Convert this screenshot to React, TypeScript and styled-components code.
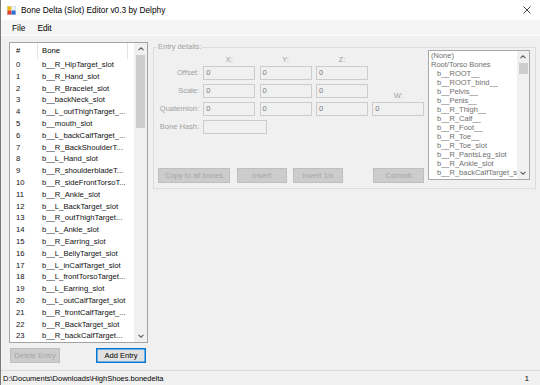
import React from "react";
import styled, { createGlobalStyle } from "styled-components";

const entries = [
  "b__R_HipTarget_slot",
  "b__R_Hand_slot",
  "b__R_Bracelet_slot",
  "b__backNeck_slot",
  "b__L_outThighTarget_...",
  "b__mouth_slot",
  "b__L_backCalfTarget_...",
  "b__R_BackShoulderT...",
  "b__L_Hand_slot",
  "b__R_shoulderbladeT...",
  "b__R_sideFrontTorsoT...",
  "b__R_Ankle_slot",
  "b__L_BackTarget_slot",
  "b__R_outThighTarget...",
  "b__L_Ankle_slot",
  "b__R_Earring_slot",
  "b__L_BellyTarget_slot",
  "b__L_inCalfTarget_slot",
  "b__L_frontTorsoTarget...",
  "b__L_Earring_slot",
  "b__L_outCalfTarget_slot",
  "b__R_frontCalfTarget_...",
  "b__R_BackTarget_slot",
  "b__R_backCalfTarget...",
];

const bones = [
  { name: "(None)", indent: false },
  { name: "Root/Torso Bones", indent: false },
  { name: "b__ROOT__", indent: true },
  { name: "b__ROOT_bind__", indent: true },
  { name: "b__Pelvis__", indent: true },
  { name: "b__Penis__", indent: true },
  { name: "b__R_Thigh__", indent: true },
  { name: "b__R_Calf__", indent: true },
  { name: "b__R_Foot__", indent: true },
  { name: "b__R_Toe__", indent: true },
  { name: "b__R_Toe_slot", indent: true },
  { name: "b__R_PantsLeg_slot", indent: true },
  { name: "b__R_Ankle_slot", indent: true },
  { name: "b__R_backCalfTarget_slot", indent: true },
];

const Chevron = ({ down }: { down?: boolean }) => (
  <svg width="6" height="4" viewBox="0 0 6 4">
    <polyline
      points={down ? "0.5,0.8 3,3.2 5.5,0.8" : "0.5,3.2 3,0.8 5.5,3.2"}
      fill="none"
      stroke="#606060"
      strokeWidth="1.1"
    />
  </svg>
);

const AppIcon = () => (
  <svg width="9" height="9" viewBox="0 0 9 9">
    <rect x="0" y="0" width="9" height="9" fill="#ffffff" stroke="#9aa6b8" strokeWidth="0.8" />
    <rect x="0.5" y="0.5" width="4" height="4" fill="#f2b705" />
    <rect x="4.5" y="0.5" width="4" height="4" fill="#e8eef8" />
    <rect x="0.5" y="4.5" width="4" height="4" fill="#e53b2c" />
    <rect x="4.5" y="4.5" width="4" height="4" fill="#2a6fd6" />
  </svg>
);

const CloseIcon = () => (
  <svg width="8" height="8" viewBox="0 0 8 8">
    <path d="M0.5 0.5 L7.5 7.5 M7.5 0.5 L0.5 7.5" stroke="#111" strokeWidth="0.8" />
  </svg>
);

const Scrollbar = ({ thumbTop, thumbHeight, width }: { thumbTop: number; thumbHeight: number; width: number }) => (
  <ScrollTrack $width={width}>
    <ScrollArrow>
      <Chevron />
    </ScrollArrow>
    <ScrollBody>
      <ScrollThumb style={{ marginTop: thumbTop, height: thumbHeight }} />
    </ScrollBody>
    <ScrollArrow>
      <Chevron down />
    </ScrollArrow>
  </ScrollTrack>
);

const App = () => {
  return (
    <>
      <GlobalStyle />
      <Window>
        <TitleBar>
          <AppIcon />
          <TitleText>Bone Delta (Slot) Editor v0.3 by Delphy</TitleText>
          <CloseButton>
            <CloseIcon />
          </CloseButton>
        </TitleBar>
        <MenuBar>
          <MenuItem>File</MenuItem>
          <MenuItem>Edit</MenuItem>
        </MenuBar>
        <Body>
          <LeftColumn>
            <ListView>
              <ListContent>
                <ListHeader>
                  <HeaderCell $width={28} $pad={6}>#</HeaderCell>
                  <HeaderCell $width={90} $pad={4}>Bone</HeaderCell>
                </ListHeader>
                {entries.map((name, i) => (
                  <ListRow key={i}>
                    <RowCell $width={28} $pad={6}>{i}</RowCell>
                    <RowCell $width={90} $pad={4}>{name}</RowCell>
                  </ListRow>
                ))}
              </ListContent>
              <Scrollbar width={13} thumbTop={0} thumbHeight={73} />
            </ListView>
            <ButtonRow>
              <WinButton $width={50} disabled>Delete Entry</WinButton>
              <WinButton $width={50} $primary>Add Entry</WinButton>
            </ButtonRow>
          </LeftColumn>

          <EntryGroup>
            <GroupLegend>Entry details:</GroupLegend>
            <GroupContent>
              <FormColumn>
                <FieldGrid>
                  <span />
                  <AxisLabel>X:</AxisLabel>
                  <AxisLabel>Y:</AxisLabel>
                  <AxisLabel>Z:</AxisLabel>
                  <span />

                  <FieldLabel>Offset:</FieldLabel>
                  <TextBox>0</TextBox>
                  <TextBox>0</TextBox>
                  <TextBox>0</TextBox>
                  <span />

                  <FieldLabel>Scale:</FieldLabel>
                  <TextBox>0</TextBox>
                  <TextBox>0</TextBox>
                  <TextBox>0</TextBox>
                  <WLabel>W:</WLabel>

                  <FieldLabel>Quaternion:</FieldLabel>
                  <TextBox>0</TextBox>
                  <TextBox>0</TextBox>
                  <TextBox>0</TextBox>
                  <TextBox>0</TextBox>

                  <FieldLabel>Bone Hash:</FieldLabel>
                  <TextBox $width={64} />
                </FieldGrid>
                <ActionRow>
                  <WinButton $width={72} disabled>Copy to all bones</WinButton>
                  <WinButton $width={50} $gap={7} disabled>Invert</WinButton>
                  <WinButton $width={50} $gap={6} disabled>Invert 1/x</WinButton>
                  <WinButton $width={51} $gap={30} disabled>Commit</WinButton>
                </ActionRow>
              </FormColumn>
              <BoneList>
                <BoneItems>
                  {bones.map((b) => (
                    <BoneItem key={b.name} $indent={b.indent}>{b.name}</BoneItem>
                  ))}
                </BoneItems>
                <Scrollbar width={12} thumbTop={0} thumbHeight={11} />
              </BoneList>
            </GroupContent>
          </EntryGroup>
        </Body>
        <StatusBar>
          <span>D:\Documents\Downloads\HighShoes.bonedelta</span>
          <span>1</span>
        </StatusBar>
      </Window>
    </>
  );
};

export default App;

const GlobalStyle = createGlobalStyle`
  body {
    margin: 0;
    font-family: "Liberation Sans", Arial, sans-serif;
  }
`;

const Window = styled.div`
  width: 540px;
  height: 385px;
  box-sizing: border-box;
  border-left: 1px solid #7a7a7a;
  background: #f0f0f0;
  display: flex;
  flex-direction: column;
  overflow: hidden;
`;

const TitleBar = styled.div`
  height: 20px;
  flex-shrink: 0;
  background: #ffffff;
  display: flex;
  align-items: center;
  padding-left: 6px;
  gap: 5px;
`;

const TitleText = styled.span`
  font-size: 8.3px;
  color: #000;
`;

const CloseButton = styled.div`
  margin-left: auto;
  margin-right: 9px;
  display: flex;
`;

const MenuBar = styled.div`
  height: 15px;
  flex-shrink: 0;
  background: #f5f5f5;
  border-bottom: 1px solid #fbfbfb;
  display: flex;
  align-items: center;
  padding-left: 11px;
  gap: 12px;
`;

const MenuItem = styled.span`
  font-size: 8.3px;
  color: #000;
`;

const Body = styled.div`
  flex: 1;
  display: flex;
  align-items: flex-start;
  gap: 5px;
  padding: 6px 0 0 8px;
`;

const LeftColumn = styled.div`
  display: flex;
  flex-direction: column;
  gap: 5px;
`;

const ListView = styled.div`
  width: 139px;
  height: 301px;
  box-sizing: border-box;
  border: 1px solid #a3a3a3;
  background: #ffffff;
  display: flex;
`;

const ListContent = styled.div`
  flex: 1;
  overflow: hidden;
`;

const ListHeader = styled.div`
  height: 16px;
  display: flex;
  align-items: center;
`;

const HeaderCell = styled.div<{ $width: number; $pad: number }>`
  width: ${(p) => p.$width}px;
  height: 100%;
  box-sizing: border-box;
  padding-left: ${(p) => p.$pad}px;
  border-right: 1px solid #e5e5e5;
  font-size: 7.7px;
  line-height: 16px;
  color: #000;
`;

const ListRow = styled.div`
  height: 11.8px;
  display: flex;
  align-items: center;
`;

const RowCell = styled.div<{ $width: number; $pad: number }>`
  width: ${(p) => p.$width}px;
  flex-shrink: 0;
  box-sizing: border-box;
  padding-left: ${(p) => p.$pad}px;
  font-size: 7.7px;
  line-height: 11.8px;
  color: #111;
  white-space: nowrap;
`;

const ScrollTrack = styled.div<{ $width: number }>`
  width: ${(p) => p.$width}px;
  flex-shrink: 0;
  background: #f0f0f0;
  display: flex;
  flex-direction: column;
`;

const ScrollArrow = styled.div`
  height: 12px;
  display: flex;
  align-items: center;
  justify-content: center;
  flex-shrink: 0;
`;

const ScrollBody = styled.div`
  flex: 1;
  display: flex;
  flex-direction: column;
  align-items: center;
`;

const ScrollThumb = styled.div`
  width: 9px;
  background: #cdcdcd;
`;

const ButtonRow = styled.div`
  display: flex;
  justify-content: space-between;
  padding: 0 2px 0 1px;
`;

const WinButton = styled.button<{ $width: number; $primary?: boolean; $gap?: number }>`
  width: ${(p) => p.$width}px;
  height: 15px;
  margin: 0 0 0 ${(p) => p.$gap ?? 0}px;
  padding: 0;
  box-sizing: border-box;
  font-family: "Liberation Sans", Arial, sans-serif;
  font-size: 7.5px;
  white-space: nowrap;
  border: 1px solid ${(p) => (p.$primary ? "#0078d7" : "#bfbfbf")};
  background: ${(p) => (p.$primary ? "#e1e1e1" : "#cccccc")};
  color: ${(p) => (p.$primary ? "#000" : "#a6a6a6")};
  ${(p) => (p.$primary ? "box-shadow: inset 0 0 0 0.5px #0078d7;" : "")}
`;

const EntryGroup = styled.fieldset`
  margin: 0;
  width: 383px;
  box-sizing: border-box;
  border: 1px solid #dcdcdc;
  padding: 0 4px 5px 4px;
  min-width: 0;
`;

const GroupLegend = styled.legend`
  padding: 0 1px;
  margin-left: -1px;
  font-size: 7.5px;
  line-height: 10px;
  color: #a0a0a0;
`;

const GroupContent = styled.div`
  display: flex;
  align-items: flex-start;
`;

const FormColumn = styled.div`
  width: 266px;
  display: flex;
  flex-direction: column;
`;

const FieldGrid = styled.div`
  display: grid;
  grid-template-columns: 41px repeat(4, 52px);
  column-gap: 4.3px;
  row-gap: 4px;
  padding-top: 3px;
`;

const AxisLabel = styled.span`
  font-size: 7.5px;
  line-height: 10px;
  margin-bottom: -3px;
  color: #a0a0a0;
  text-align: center;
`;

const WLabel = styled(AxisLabel)`
  align-self: end;
  margin-bottom: -3px;
`;

const FieldLabel = styled.span`
  font-size: 7.5px;
  line-height: 14px;
  color: #a0a0a0;
  text-align: right;
  white-space: nowrap;
`;

const TextBox = styled.div<{ $width?: number }>`
  width: ${(p) => p.$width ?? 52}px;
  height: 14px;
  box-sizing: border-box;
  border: 1px solid #cccccc;
  background: #f0f0f0;
  padding-left: 2px;
  font-size: 7.5px;
  line-height: 12px;
  color: #7a7a7a;
`;

const ActionRow = styled.div`
  display: flex;
  margin-top: 34px;
`;

const BoneList = styled.div`
  width: 102px;
  height: 130px;
  margin: -2px 0 0 4px;
  box-sizing: border-box;
  border: 1px solid #a8a8a8;
  background: #ffffff;
  display: flex;
`;

const BoneItems = styled.div`
  flex: 1;
  overflow: hidden;
`;

const BoneItem = styled.div<{ $indent: boolean }>`
  height: 9px;
  line-height: 9px;
  padding-left: ${(p) => (p.$indent ? 8 : 2)}px;
  font-size: 7.5px;
  color: #707070;
  white-space: nowrap;
`;

const StatusBar = styled.div`
  height: 15px;
  flex-shrink: 0;
  box-sizing: border-box;
  border-top: 1px solid #dadada;
  display: flex;
  align-items: center;
  justify-content: space-between;
  padding: 0 11px 0 2px;
  font-size: 7.5px;
  color: #000;
`;
